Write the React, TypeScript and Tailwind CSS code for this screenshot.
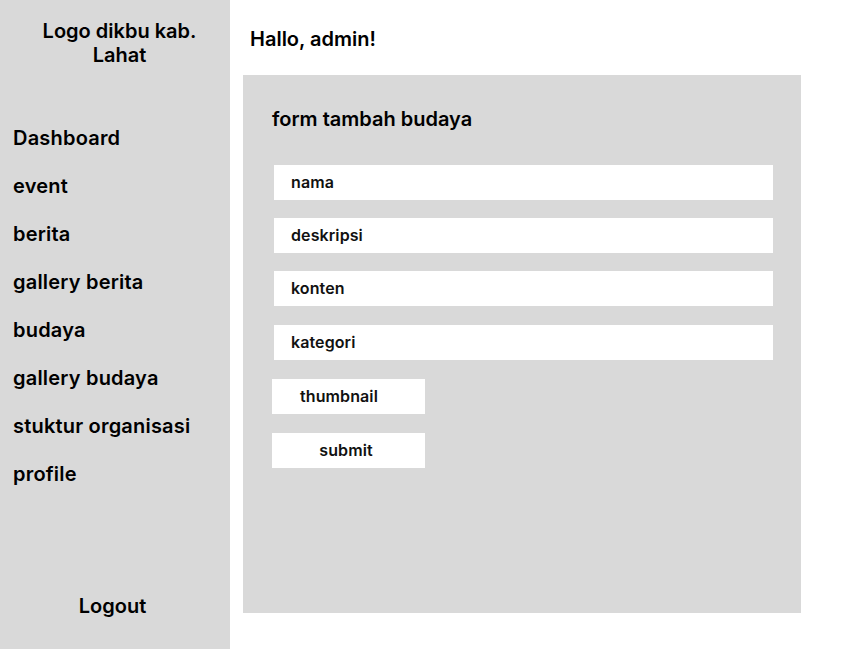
import React from "react";

const menu = [
  "Dashboard",
  "event",
  "berita",
  "gallery berita",
  "budaya",
  "gallery budaya",
  "stuktur organisasi",
  "profile",
];

function Field({ label, className = "" }: { label: string; className?: string }) {
  return (
    <div className={`h-[35px] w-[499px] ml-[2px] bg-white flex items-center pl-[17px] pb-[2px] text-[16px] font-semibold tracking-[0.1px] text-[#111] ${className}`}>
      {label}
    </div>
  );
}

export default function App() {
  return (
    <div
      className="flex w-[843px] h-[649px] bg-white text-black overflow-hidden"
      style={{ fontFamily: "Inter, 'Noto Sans', sans-serif" }}
    >
      <aside className="w-[230px] h-[649px] bg-[#d9d9d9] flex flex-col shrink-0">
        <div className="pt-[19px] text-center text-[20px] leading-6 font-semibold pl-[9px]">
          Logo dikbu kab.
          <br />
          Lahat
        </div>
        <nav className="mt-[59px] pl-[13px] flex flex-col gap-6">
          {menu.map((m) => (
            <div key={m} className="text-[20px] leading-6 font-semibold tracking-[0.2px]">
              {m}
            </div>
          ))}
        </nav>
        <div className="mt-auto mb-[31px] text-center text-[20px] leading-6 font-semibold pr-[5px]">
          Logout
        </div>
      </aside>
      <main className="flex-1 pl-[13px]">
        <div className="pt-[27px] pl-[7px] text-[20px] leading-6 font-semibold">Hallo, admin!</div>
        <section className="mt-[24px] w-[558px] h-[538px] bg-[#d9d9d9] pt-[32px] pl-[29px]">
          <h2 className="text-[20px] leading-6 font-semibold">form tambah budaya</h2>
          <Field label="nama" className="mt-[34px]" />
          <Field label="deskripsi" className="mt-[18px]" />
          <Field label="konten" className="mt-[18px]" />
          <Field label="kategori" className="mt-[19px]" />
          <div className="mt-[19px] h-[35px] w-[153px] bg-white flex items-center pl-[28px] pb-[2px] text-[16px] font-semibold tracking-[0.1px] text-[#111]">
            thumbnail
          </div>
          <div className="mt-[19px] h-[35px] w-[153px] bg-white flex items-center justify-center pr-[5px] pb-[2px] text-[16px] font-semibold tracking-[0.1px] text-[#111]">
            submit
          </div>
        </section>
      </main>
    </div>
  );
}
